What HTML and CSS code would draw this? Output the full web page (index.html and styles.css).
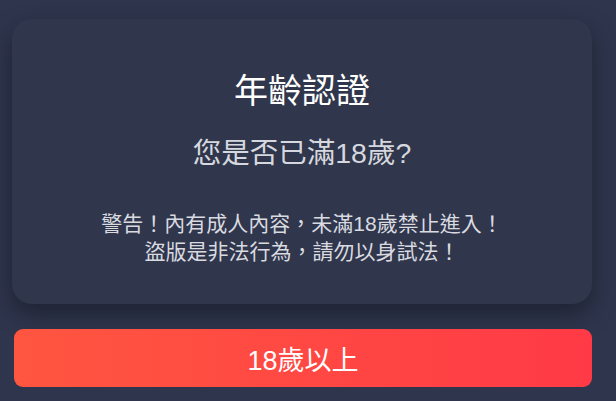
FILE: index.html
```html
<!DOCTYPE html>
<html lang="zh-Hant">
<head>
<meta charset="utf-8">
<link rel="stylesheet" href="styles.css">
</head>
<body>
<div class="page">
  <div class="card">
    <h1 class="title">年齡認證</h1>
    <p class="question">您是否已滿18歲?</p>
    <p class="warning">警告！內有成人內容，未滿18歲禁止進入！<br>盜版是非法行為，請勿以身試法！</p>
  </div>
  <button class="enter">18歲以上</button>
</div>
</body>
</html>
```
FILE: styles.css
```css
html, body {
  margin: 0;
  padding: 0;
  background: #2f354c;
  font-family: "Liberation Sans", "Noto Sans CJK TC", sans-serif;
  width: 616px;
  height: 401px;
  overflow: hidden;
}
.page {
  padding: 19px 24px 0 12px;
  display: flex;
  flex-direction: column;
}
.card {
  background: #30364b;
  border-radius: 20px;
  box-shadow: 0 10px 22px rgba(14, 17, 28, 0.5);
  height: 285px;
  display: flex;
  flex-direction: column;
  align-items: center;
  text-align: center;
  box-sizing: border-box;
  padding-top: 47px;
}
.title {
  margin: 0;
  font-weight: normal;
  font-size: 34px;
  line-height: 50px;
  color: #ffffff;
}
.question {
  margin: 19px 0 0;
  font-size: 28.5px;
  line-height: 36px;
  color: #d6d8df;
}
.warning {
  margin: 39px 0 0;
  font-size: 21px;
  line-height: 28px;
  color: #d9dbe1;
}
.enter {
  margin: 25px 0 0 2px;
  height: 58px;
  border: none;
  border-radius: 9px;
  background: linear-gradient(90deg, #ff5640, #ff3a46);
  color: #ffffff;
  font-family: "Liberation Sans", "Noto Sans CJK TC", sans-serif;
  font-size: 27px;
  padding: 0;
}
```
